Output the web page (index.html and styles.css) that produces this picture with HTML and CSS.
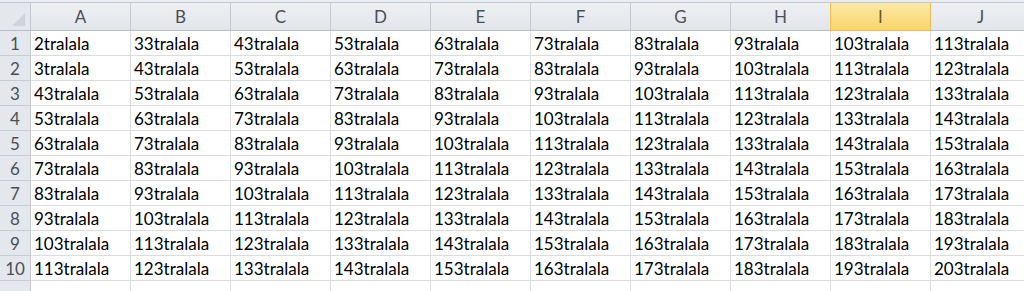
FILE: index.html
```html
<!DOCTYPE html>
<html>
<head>
<meta charset="utf-8">
<link rel="stylesheet" href="styles.css">
</head>
<body>
<div class="sheet">
  <div class="top-strip"></div>
  <div class="grid" id="grid">
    <div class="corner"><span class="corner-tri"></span></div>
    <div class="colhead">A</div>
    <div class="colhead">B</div>
    <div class="colhead">C</div>
    <div class="colhead">D</div>
    <div class="colhead">E</div>
    <div class="colhead">F</div>
    <div class="colhead">G</div>
    <div class="colhead">H</div>
    <div class="colhead selected">I</div>
    <div class="colhead">J</div>

    <div class="rowhead">1</div><div class="cell">2tralala</div><div class="cell">33tralala</div><div class="cell">43tralala</div><div class="cell">53tralala</div><div class="cell">63tralala</div><div class="cell">73tralala</div><div class="cell">83tralala</div><div class="cell">93tralala</div><div class="cell">103tralala</div><div class="cell">113tralala</div>
    <div class="rowhead">2</div><div class="cell">3tralala</div><div class="cell">43tralala</div><div class="cell">53tralala</div><div class="cell">63tralala</div><div class="cell">73tralala</div><div class="cell">83tralala</div><div class="cell">93tralala</div><div class="cell">103tralala</div><div class="cell">113tralala</div><div class="cell">123tralala</div>
    <div class="rowhead">3</div><div class="cell">43tralala</div><div class="cell">53tralala</div><div class="cell">63tralala</div><div class="cell">73tralala</div><div class="cell">83tralala</div><div class="cell">93tralala</div><div class="cell">103tralala</div><div class="cell">113tralala</div><div class="cell">123tralala</div><div class="cell">133tralala</div>
    <div class="rowhead">4</div><div class="cell">53tralala</div><div class="cell">63tralala</div><div class="cell">73tralala</div><div class="cell">83tralala</div><div class="cell">93tralala</div><div class="cell">103tralala</div><div class="cell">113tralala</div><div class="cell">123tralala</div><div class="cell">133tralala</div><div class="cell">143tralala</div>
    <div class="rowhead">5</div><div class="cell">63tralala</div><div class="cell">73tralala</div><div class="cell">83tralala</div><div class="cell">93tralala</div><div class="cell">103tralala</div><div class="cell">113tralala</div><div class="cell">123tralala</div><div class="cell">133tralala</div><div class="cell">143tralala</div><div class="cell">153tralala</div>
    <div class="rowhead">6</div><div class="cell">73tralala</div><div class="cell">83tralala</div><div class="cell">93tralala</div><div class="cell">103tralala</div><div class="cell">113tralala</div><div class="cell">123tralala</div><div class="cell">133tralala</div><div class="cell">143tralala</div><div class="cell">153tralala</div><div class="cell">163tralala</div>
    <div class="rowhead">7</div><div class="cell">83tralala</div><div class="cell">93tralala</div><div class="cell">103tralala</div><div class="cell">113tralala</div><div class="cell">123tralala</div><div class="cell">133tralala</div><div class="cell">143tralala</div><div class="cell">153tralala</div><div class="cell">163tralala</div><div class="cell">173tralala</div>
    <div class="rowhead">8</div><div class="cell">93tralala</div><div class="cell">103tralala</div><div class="cell">113tralala</div><div class="cell">123tralala</div><div class="cell">133tralala</div><div class="cell">143tralala</div><div class="cell">153tralala</div><div class="cell">163tralala</div><div class="cell">173tralala</div><div class="cell">183tralala</div>
    <div class="rowhead">9</div><div class="cell">103tralala</div><div class="cell">113tralala</div><div class="cell">123tralala</div><div class="cell">133tralala</div><div class="cell">143tralala</div><div class="cell">153tralala</div><div class="cell">163tralala</div><div class="cell">173tralala</div><div class="cell">183tralala</div><div class="cell">193tralala</div>
    <div class="rowhead">10</div><div class="cell">113tralala</div><div class="cell">123tralala</div><div class="cell">133tralala</div><div class="cell">143tralala</div><div class="cell">153tralala</div><div class="cell">163tralala</div><div class="cell">173tralala</div><div class="cell">183tralala</div><div class="cell">193tralala</div><div class="cell">203tralala</div>
    <div class="rowhead last">11</div><div class="cell"></div><div class="cell"></div><div class="cell"></div><div class="cell"></div><div class="cell"></div><div class="cell"></div><div class="cell"></div><div class="cell"></div><div class="cell"></div><div class="cell"></div>
  </div>
</div>
</body>
</html>
```

FILE: styles.css
```css
html, body {
  margin: 0;
  padding: 0;
  background: #ffffff;
  overflow: hidden;
}
.sheet {
  width: 1024px;
  height: 291px;
  overflow: hidden;
  font-family: "Lato", "Liberation Sans", sans-serif;
}
.top-strip {
  height: 3px;
  box-sizing: border-box;
  background: #e9ecf0;
  border-bottom: 1px solid #c3c8ce;
}
.grid {
  display: grid;
  grid-template-columns: 31px repeat(10, 100px);
  grid-template-rows: 28px repeat(11, 25px);
  width: 1031px;
}
.grid > div {
  box-sizing: border-box;
  overflow: hidden;
  white-space: nowrap;
}
.corner {
  background: #e4e7ec;
  border-right: 1px solid #c4c8ce;
  border-bottom: 1px solid #b9bec5;
  position: relative;
}
.corner-tri {
  position: absolute;
  right: 5px;
  bottom: 4px;
  width: 0;
  height: 0;
  border-left: 13px solid transparent;
  border-bottom: 13px solid #cfd3d8;
}
.colhead {
  background: linear-gradient(#eef0f3, #e2e5ea);
  border-right: 1px solid #c4c8ce;
  border-bottom: 1px solid #b9bec5;
  color: #4a4f58;
  font-size: 17px;
  text-align: center;
  line-height: 27px;
}
.colhead.selected {
  background: linear-gradient(#fbe9a6, #f8d56b);
  border-right: 1px solid #f2bd57;
  border-left: 1px solid #f2bd57;
  border-bottom: 1px solid #f2b94f;
  margin-left: -1px;
  color: #6b5a2c;
}
.rowhead {
  background: #e4e8ed;
  border-right: 1px solid #c4c8ce;
  border-bottom: 1px solid #c8ccd2;
  color: #4a4f58;
  font-size: 17px;
  text-align: center;
  line-height: 24px;
  padding-top: 1px;
}
.rowhead.last {
  padding-top: 7px;
}
.cell {
  background: #ffffff;
  border-right: 1px solid #dadcdf;
  border-bottom: 1px solid #dadcdf;
  color: #000;
  font-size: 17px;
  padding-left: 3px;
  line-height: 24px;
  padding-top: 1px;
}
```
